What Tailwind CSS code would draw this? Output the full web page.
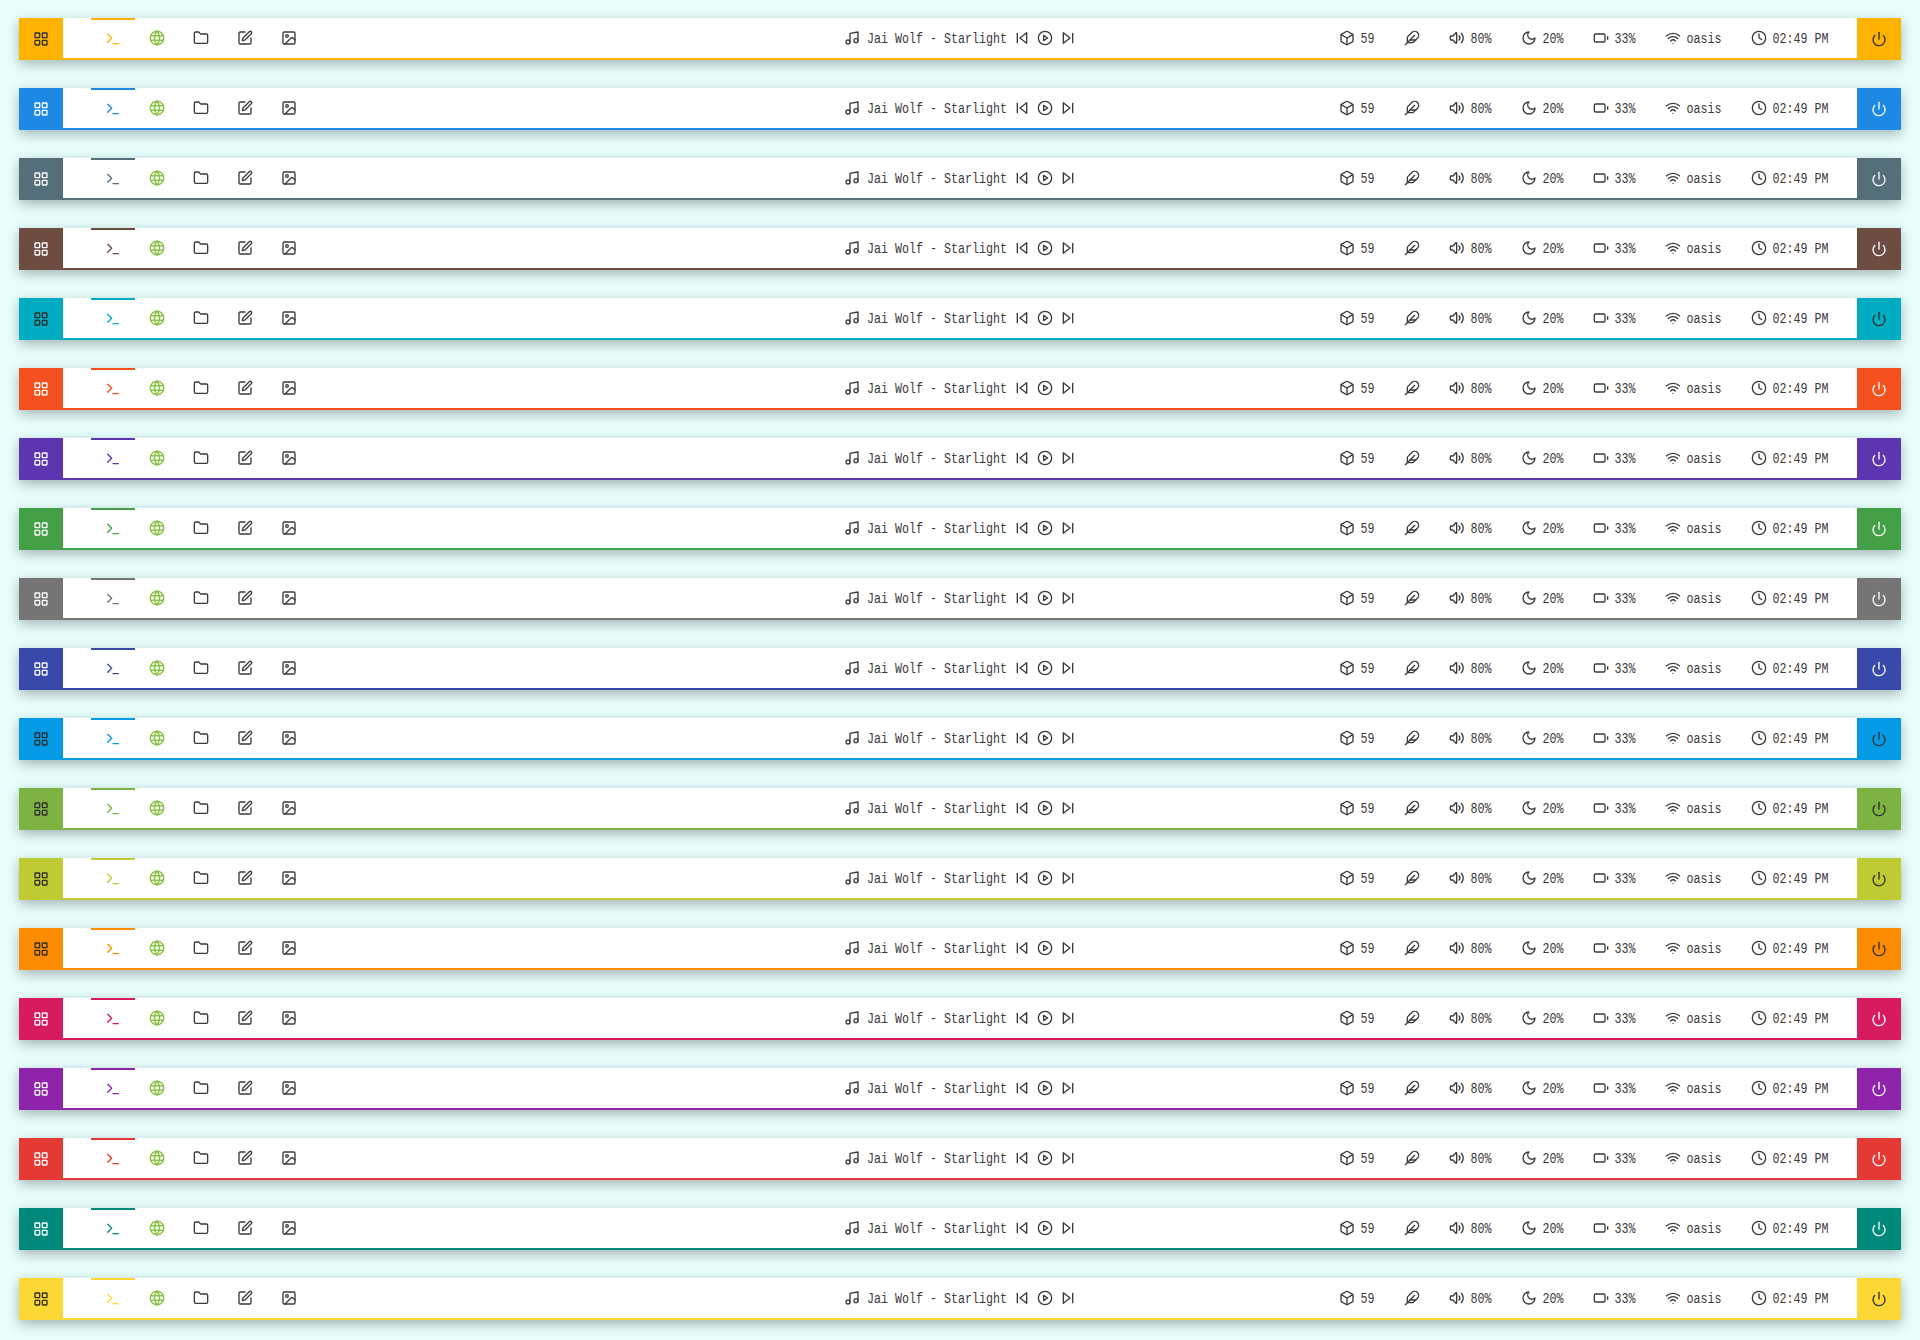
<!DOCTYPE html>
<html lang="en">
<head>
    <meta charset="UTF-8">
    <meta name="viewport" content="width=device-width, initial-scale=1.0">
    <script src="https://cdn.jsdelivr.net/npm/@tailwindcss/browser@4"></script>
    <title>Status bars</title>
</head>
<body class="h-[1340px] overflow-hidden bg-[#e8fffe] font-['Liberation_Mono',monospace] text-[11.67px] text-[#3a3a3a]">

    <svg class="hidden">
        <symbol id="i-grid" viewBox="0 0 24 24"><rect x="3" y="3" width="7" height="7" rx="1"/><rect x="14" y="3" width="7" height="7" rx="1"/><rect x="3" y="14" width="7" height="7" rx="1"/><rect x="14" y="14" width="7" height="7" rx="1"/></symbol>
        <symbol id="i-terminal" viewBox="0 0 24 24"><path d="M4 17l6-6-6-6"/><path d="M12 19h8"/></symbol>
        <symbol id="i-globe" viewBox="0 0 24 24"><circle cx="12" cy="12" r="9"/><path d="M3.6 9h16.8"/><path d="M3.6 15h16.8"/><path d="M11.5 3a17 17 0 0 0 0 18"/><path d="M12.5 3a17 17 0 0 1 0 18"/></symbol>
        <symbol id="i-folder" viewBox="0 0 24 24"><path d="M20 20a2 2 0 0 0 2-2V8a2 2 0 0 0-2-2h-7.9a2 2 0 0 1-1.69-.9L9.6 3.9A2 2 0 0 0 7.93 3H4a2 2 0 0 0-2 2v13a2 2 0 0 0 2 2Z"/></symbol>
        <symbol id="i-edit" viewBox="0 0 24 24"><path d="M12 3H5a2 2 0 0 0-2 2v14a2 2 0 0 0 2 2h14a2 2 0 0 0 2-2v-7"/><path d="M18.375 2.625a1 1 0 0 1 3 3l-9.013 9.014a2 2 0 0 1-.853.505l-2.873.84a.5.5 0 0 1-.62-.62l.84-2.873a2 2 0 0 1 .506-.852z"/></symbol>
        <symbol id="i-image" viewBox="0 0 24 24"><rect x="3" y="3" width="18" height="18" rx="2"/><circle cx="9" cy="9" r="2"/><path d="M21 15l-3.086-3.086a2 2 0 0 0-2.828 0L6 21"/></symbol>
        <symbol id="i-music" viewBox="0 0 24 24"><path d="M9 18V5l12-2v13"/><circle cx="6" cy="18" r="3"/><circle cx="18" cy="16" r="3"/></symbol>
        <symbol id="i-prev" viewBox="0 0 24 24"><path d="M19 20L9 12l10-8z"/><path d="M5 19V5"/></symbol>
        <symbol id="i-play" viewBox="0 0 24 24"><circle cx="12" cy="12" r="10"/><path d="M10 8l6 4-6 4z"/></symbol>
        <symbol id="i-next" viewBox="0 0 24 24"><path d="M5 4l10 8-10 8z"/><path d="M19 5v14"/></symbol>
        <symbol id="i-box" viewBox="0 0 24 24"><path d="M21 8a2 2 0 0 0-1-1.73l-7-4a2 2 0 0 0-2 0l-7 4A2 2 0 0 0 3 8v8a2 2 0 0 0 1 1.73l7 4a2 2 0 0 0 2 0l7-4A2 2 0 0 0 21 16Z"/><path d="M3.3 7l8.7 5 8.7-5"/><path d="M12 22V12"/></symbol>
        <symbol id="i-feather" viewBox="0 0 24 24"><path d="M12.67 19a2 2 0 0 0 1.416-.588l6.154-6.172a6 6 0 0 0-8.49-8.49L5.586 9.914A2 2 0 0 0 5 11.328V18a1 1 0 0 0 1 1z"/><path d="M16 8L2 22"/><path d="M17.5 15H9"/></symbol>
        <symbol id="i-volume" viewBox="0 0 24 24"><path d="M6 15H3a1 1 0 0 1-1-1v-4a1 1 0 0 1 1-1h3l4-4.5a.8.8 0 0 1 1.5.5v14a.8.8 0 0 1-1.5.5z"/><path d="M15 9a4.5 4.5 0 0 1 0 6"/><path d="M18.5 5a10 10 0 0 1 0 14"/></symbol>
        <symbol id="i-moon" viewBox="0 0 24 24"><path d="M12 3a6 6 0 0 0 9 9 9 9 0 1 1-9-9Z"/></symbol>
        <symbol id="i-battery" viewBox="0 0 24 24"><rect x="2" y="6" width="16" height="12" rx="2"/><path d="M22 14v-4"/></symbol>
        <symbol id="i-wifi" viewBox="0 0 24 24"><path d="M12 20h.01"/><path d="M2 8.82a15 15 0 0 1 20 0"/><path d="M5 12.859a10 10 0 0 1 14 0"/><path d="M8.5 16.429a5 5 0 0 1 7 0"/></symbol>
        <symbol id="i-clock" viewBox="0 0 24 24"><circle cx="12" cy="12" r="10"/><path d="M12 6v6l4 2"/></symbol>
        <symbol id="i-power" viewBox="0 0 24 24"><path d="M12 2v10"/><path d="M18.4 6.6a9 9 0 1 1-12.77.04"/></symbol>
    </svg>

    <div id="bars" class="flex flex-col gap-[28px] pt-[18px] pb-[20px] px-[19px]"></div>

    <script>
        // one entry per colour theme: the accent, and the icon colour on the end blocks
        const dark = 'text-[#2e2e2e]';
        const light = 'text-white';
        const themes = [
            ['[--c:#ffb300]', dark],
            ['[--c:#1e88e5]', light],
            ['[--c:#546e7a]', light],
            ['[--c:#6d4c41]', light],
            ['[--c:#00acc1]', dark],
            ['[--c:#f4511e]', light],
            ['[--c:#5e35b1]', light],
            ['[--c:#43a047]', light],
            ['[--c:#757575]', light],
            ['[--c:#3949ab]', light],
            ['[--c:#039be5]', dark],
            ['[--c:#7cb342]', dark],
            ['[--c:#c0ca33]', dark],
            ['[--c:#fb8c00]', dark],
            ['[--c:#d81b60]', light],
            ['[--c:#8e24aa]', light],
            ['[--c:#e53935]', light],
            ['[--c:#00897b]', light],
            ['[--c:#fdd835]', dark],
        ];

        function icon(name, cls = 'size-4') {
            return `<svg class="${cls} shrink-0 fill-none stroke-current stroke-2 [stroke-linecap:round] [stroke-linejoin:round]"><use href="#i-${name}"/></svg>`;
        }

        // the mono font installed here is wider and shorter than the one in the design
        function label(text, cls = '') {
            return `<span class="inline-block whitespace-pre scale-y-[1.25] translate-y-[2px] ${cls}">${text}</span>`;
        }

        function navItem(name, cls = '') {
            return `<div class="w-[44px] h-full flex items-center justify-center ${cls}">${name}</div>`;
        }

        function stat(name, text) {
            return `<div class="flex items-center gap-[6px]">${icon(name)}${label(text)}</div>`;
        }

        function bar([accent, iconColor]) {
            return `
            <div class="${accent} flex h-[42px] shadow-[0_4px_12px_rgba(0,0,0,0.3)]">
                <div class="w-[44px] flex items-center justify-center bg-[var(--c)] ${iconColor}">${icon('grid')}</div>
                <div class="flex-1 grid grid-cols-[1fr_auto_1fr] items-center h-full bg-white border-b-2 border-[var(--c)]">
                    <div class="flex items-center h-full pl-[28px]">
                        ${navItem(icon('terminal'), 'border-t-2 border-[var(--c)] text-[var(--c)]')}
                        ${navItem(icon('globe', 'size-[18px]'), 'text-[#8bc34a]')}
                        ${navItem(icon('folder'))}
                        ${navItem(icon('edit'))}
                        ${navItem(icon('image'))}
                    </div>
                    <div class="flex items-center">
                        ${icon('music')}
                        ${label('Jai Wolf - Starlight', 'ml-[7px] mr-[7px]')}
                        <div class="flex items-center gap-[7px]">${icon('prev')}${icon('play')}${icon('next')}</div>
                    </div>
                    <div class="flex items-center justify-end gap-[29px] pr-[28.5px]">
                        ${stat('box', '59')}
                        ${icon('feather')}
                        ${stat('volume', '80%')}
                        ${stat('moon', '20%')}
                        ${stat('battery', '33%')}
                        ${stat('wifi', 'oasis')}
                        ${stat('clock', '02:49 PM')}
                    </div>
                </div>
                <div class="w-[44px] flex items-center justify-center bg-[var(--c)] ${iconColor}">${icon('power')}</div>
            </div>`;
        }

        document.getElementById('bars').innerHTML = themes.map(bar).join('');
    </script>
</body>
</html>
